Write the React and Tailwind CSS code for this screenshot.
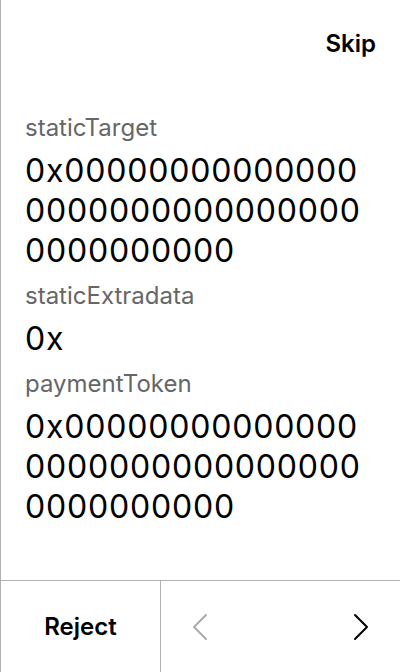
const fields = [
  { label: 'staticTarget', value: '0x0000000000000000000000000000000000000000' },
  { label: 'staticExtradata', value: '0x' },
  { label: 'paymentToken', value: '0x0000000000000000000000000000000000000000' },
];

function Chevron({ dir, className }) {
  const d = dir === 'left' ? 'M14 2 2 14l12 12' : 'M2 2l12 12L2 26';
  return (
    <svg width="16" height="28" viewBox="0 0 16 28" fill="none" className={className}>
      <path d={d} stroke="currentColor" strokeWidth="2" strokeLinecap="round" strokeLinejoin="round" />
    </svg>
  );
}

export default function App() {
  return (
    <div
      className="flex h-[672px] w-[400px] flex-col border-l border-[#b0b0b0] bg-white text-black"
      style={{ fontFamily: 'Inter, "Noto Sans", sans-serif' }}
    >
      {/* Header */}
      <div className="flex h-[88px] items-center justify-end px-6">
        <button className="text-[24px] font-semibold leading-none">Skip</button>
      </div>

      {/* Body */}
      <div className="flex flex-1 flex-col gap-[9px] pl-6 pr-[26px] pt-[24px]">
        {fields.map(f => (
          <div key={f.label} className="flex flex-col gap-[7px]">
            <div className="text-[24px] leading-[32px] text-[#666666]">{f.label}</div>
            <div className="break-all text-[32px] leading-[40px] tracking-[0.8px]">{f.value}</div>
          </div>
        ))}
      </div>

      {/* Footer */}
      <div className="flex h-[92px] border-t border-[#b0b0b0]">
        <button className="flex w-[160px] items-center justify-center border-r border-[#b0b0b0] text-[24px] font-semibold">
          Reject
        </button>
        <div className="flex flex-1 items-center justify-between px-[31px]">
          <Chevron dir="left" className="text-[#ababab]" />
          <Chevron dir="right" className="text-black" />
        </div>
      </div>
    </div>
  );
}
